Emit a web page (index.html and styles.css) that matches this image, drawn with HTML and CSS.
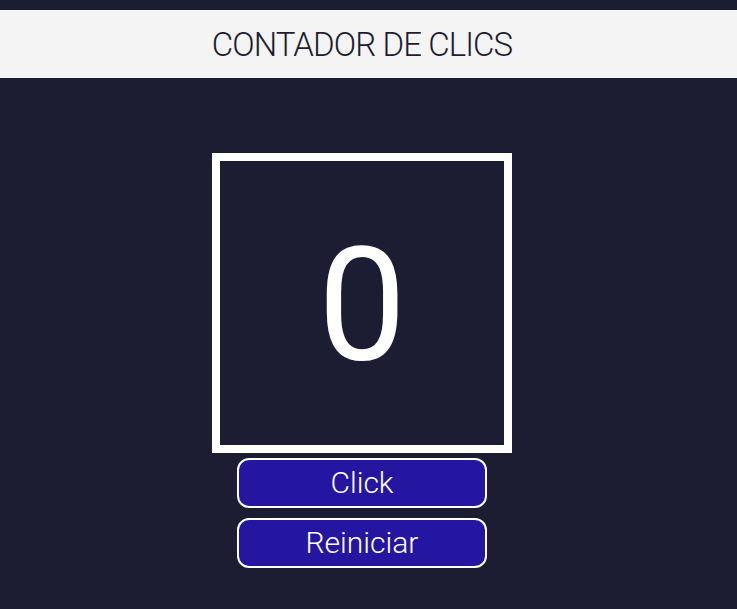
FILE: index.html
```html
<!DOCTYPE html>
<html lang="es">
<head>
<meta charset="utf-8">
<title>Contador de clics</title>
<link rel="stylesheet" href="styles.css">
</head>
<body>
<header class="header">
  <h1 class="title">CONTADOR DE CLICS</h1>
</header>
<main class="main">
  <div class="counter">0</div>
  <button class="btn">Click</button>
  <button class="btn">Reiniciar</button>
</main>
</body>
</html>
```
FILE: styles.css
```css
html, body {
  margin: 0;
  padding: 0;
}
body {
  background: #1c1d33;
  font-family: Roboto, "Noto Sans", sans-serif;
  padding-top: 10px;
}
.header {
  background: #f4f4f4;
  height: 68px;
  display: flex;
  align-items: center;
  justify-content: center;
  padding-right: 13px;
}
.title {
  margin: 0;
  font-weight: 300;
  font-size: 33px;
  letter-spacing: -0.9px;
  color: #1c1d33;
}
.main {
  display: flex;
  flex-direction: column;
  align-items: center;
  padding-top: 75px;
  padding-right: 13px;
}
.counter {
  box-sizing: border-box;
  width: 300px;
  height: 300px;
  border: 8px solid #ffffff;
  color: #ffffff;
  font-weight: 400;
  font-size: 157px;
  display: flex;
  align-items: center;
  justify-content: center;
  line-height: 1;
  padding-top: 4px;
}
.btn {
  box-sizing: border-box;
  width: 250px;
  height: 50px;
  margin-top: 5px;
  background: #2516a2;
  border: 2px solid #ffffff;
  border-radius: 12px;
  color: #ffffff;
  font-family: Roboto, "Noto Sans", sans-serif;
  font-weight: 300;
  font-size: 30px;
  padding: 0;
  line-height: 1;
}
.btn + .btn {
  margin-top: 10px;
}
```
